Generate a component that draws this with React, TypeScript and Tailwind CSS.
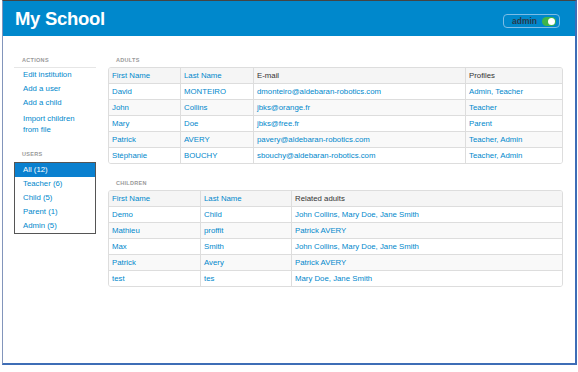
import React from "react";

interface Adult {
  first: string;
  last: string;
  email: string;
  profiles: string;
}

interface Child {
  first: string;
  last: string;
  related: string;
}

const adults: Adult[] = [
  { first: "David", last: "MONTEIRO", email: "dmonteiro@aldebaran-robotics.com", profiles: "Admin, Teacher" },
  { first: "John", last: "Collins", email: "jbks@orange.fr", profiles: "Teacher" },
  { first: "Mary", last: "Doe", email: "jbks@free.fr", profiles: "Parent" },
  { first: "Patrick", last: "AVERY", email: "pavery@aldebaran-robotics.com", profiles: "Teacher, Admin" },
  { first: "Stéphanie", last: "BOUCHY", email: "sbouchy@aldebaran-robotics.com", profiles: "Teacher, Admin" },
];

const children: Child[] = [
  { first: "Demo", last: "Child", related: "John Collins, Mary Doe, Jane Smith" },
  { first: "Mathieu", last: "proffit", related: "Patrick AVERY" },
  { first: "Max", last: "Smith", related: "John Collins, Mary Doe, Jane Smith" },
  { first: "Patrick", last: "Avery", related: "Patrick AVERY" },
  { first: "test", last: "tes", related: "Mary Doe, Jane Smith" },
];

const userFilters = ["All (12)", "Teacher (6)", "Child (5)", "Parent (1)", "Admin (5)"];

const SectionLabel: React.FC<{ children: React.ReactNode }> = ({ children }) => (
  <div className="h-[8px] leading-[8px] pl-[8px] text-[5.5px] font-bold tracking-[0.3px] text-[#999] uppercase">
    {children}
  </div>
);

const cell = "h-[15px] leading-[15px] pl-[3px] truncate";

export default function App() {
  return (
    <div
      className="w-[578px] h-[372px] bg-white text-[#333]"
      style={{ fontFamily: '"Liberation Sans", Arial, sans-serif' }}
    >
      <div className="ml-[2px] w-[575px] h-[365px] flex flex-col border-t border-t-[#444] border-l border-l-[#8295bb] border-r-2 border-r-[#3e6db6] border-b-2 border-b-[#3e6db6]">
        {/* Header */}
        <div className="h-[35px] shrink-0 bg-[#0088cc] flex items-start justify-between pl-[12px] pr-[15px]">
          <div className="mt-[7px] text-[18.5px] leading-[22px] font-bold text-white tracking-[-0.3px]">
            My School
          </div>
          <div className="mt-[13px] h-[14px] w-[57px] flex items-center rounded-[4px] border border-[#7dbde6] pl-[8px] gap-[5px]">
            <span className="text-[8.5px] font-bold text-[#2a3a4a] leading-none">admin</span>
            <span className="w-[14px] h-[9px] rounded-full bg-[#3fb54a] flex items-center justify-end pr-[1px]">
              <span className="w-[7px] h-[7px] rounded-full bg-white" />
            </span>
          </div>
        </div>

        {/* Body */}
        <div className="flex pl-[11px] pt-[20px] text-[7.8px]">
          {/* Sidebar */}
          <div className="w-[82px] shrink-0">
            <div className="pb-[3px] border-b border-[#e6e6e6]">
              <SectionLabel>Actions</SectionLabel>
            </div>
            <div className="pl-[9px] text-[#0088cc]">
              <div className="h-[14px] leading-[14px]">Edit institution</div>
              <div className="h-[14px] leading-[14px]">Add a user</div>
              <div className="h-[14px] leading-[14px]">Add a child</div>
              <div className="pt-[3px] leading-[11px]">
                Import children
                <br />
                from file
              </div>
            </div>
            <div className="mt-[15px]">
              <SectionLabel>Users</SectionLabel>
            </div>
            <div className="mt-[4px] border border-[#555]">
              {userFilters.map((f, i) => (
                <div
                  key={f}
                  className={`h-[14px] leading-[14px] pl-[8px] ${
                    i === 0 ? "bg-[#0a80cf] text-white" : "text-[#0088cc]"
                  }`}
                >
                  {f}
                </div>
              ))}
            </div>
          </div>

          {/* Main */}
          <div className="w-[455px] ml-[12px]">
            <SectionLabel>Adults</SectionLabel>
            <div className="mt-[3px] border border-[#ddd] rounded-[3px] overflow-hidden">
              <div className="flex bg-[#f5f5f5]">
                <div className={`${cell} w-[71px] text-[#0088cc]`}>First Name</div>
                <div className={`${cell} w-[73px] border-l border-[#ddd] text-[#0088cc]`}>Last Name</div>
                <div className={`${cell} w-[212px] border-l border-[#ddd]`}>E-mail</div>
                <div className={`${cell} flex-1 border-l border-[#ddd]`}>Profiles</div>
              </div>
              {adults.map((a, i) => (
                <div
                  key={a.email + a.first}
                  className={`flex border-t border-[#ddd] text-[#0088cc] ${
                    i % 2 === 1 ? "bg-[#f9f9f9]" : "bg-white"
                  }`}
                >
                  <div className={`${cell} w-[71px]`}>{a.first}</div>
                  <div className={`${cell} w-[73px] border-l border-[#ddd]`}>{a.last}</div>
                  <div className={`${cell} w-[212px] border-l border-[#ddd]`}>{a.email}</div>
                  <div className={`${cell} flex-1 border-l border-[#ddd]`}>{a.profiles}</div>
                </div>
              ))}
            </div>

            <div className="mt-[15px]">
              <SectionLabel>Children</SectionLabel>
            </div>
            <div className="mt-[3px] border border-[#ddd] rounded-[3px] overflow-hidden">
              <div className="flex bg-[#f5f5f5]">
                <div className={`${cell} w-[91px] text-[#0088cc]`}>First Name</div>
                <div className={`${cell} w-[91px] border-l border-[#ddd] text-[#0088cc]`}>Last Name</div>
                <div className={`${cell} flex-1 border-l border-[#ddd]`}>Related adults</div>
              </div>
              {children.map((c, i) => (
                <div
                  key={c.first + c.last}
                  className={`flex border-t border-[#ddd] text-[#0088cc] ${
                    i % 2 === 1 ? "bg-[#f9f9f9]" : "bg-white"
                  }`}
                >
                  <div className={`${cell} w-[91px]`}>{c.first}</div>
                  <div className={`${cell} w-[91px] border-l border-[#ddd]`}>{c.last}</div>
                  <div className={`${cell} flex-1 border-l border-[#ddd]`}>{c.related}</div>
                </div>
              ))}
            </div>
          </div>
        </div>
      </div>
    </div>
  );
}
